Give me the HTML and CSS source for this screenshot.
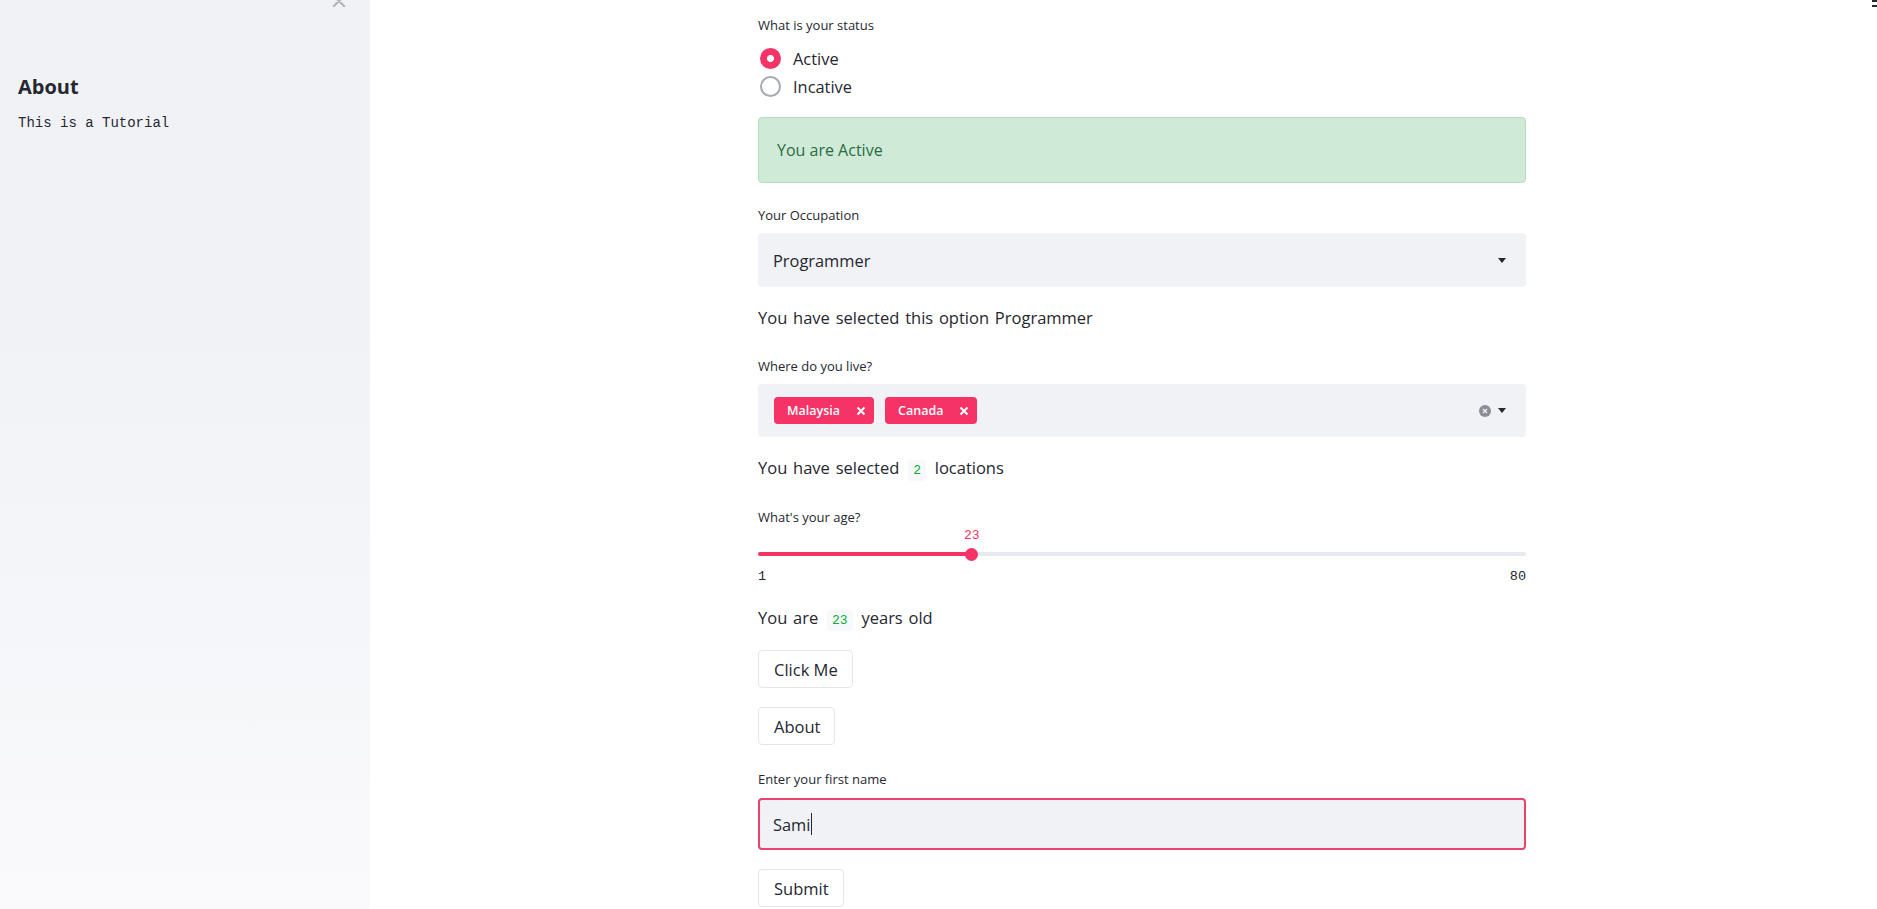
FILE: index.html
```html
<!DOCTYPE html>
<html>
<head>
<meta charset="utf-8">
<link rel="stylesheet" href="styles.css">
</head>
<body>
<div class="app">
  <aside class="sidebar">
    <button class="sidebar-close" aria-label="close">
      <svg width="14" height="14" viewBox="0 0 14 14"><path d="M2 2 L12 12 M12 2 L2 12" stroke="#b4b6bd" stroke-width="2.4" stroke-linecap="round"/></svg>
    </button>
    <h2 class="side-title">About</h2>
    <pre class="side-text">This is a Tutorial</pre>
  </aside>
  <main class="main">
    <div class="block">
      <div class="label">What is your status</div>
      <div class="radios">
        <div class="radio-row"><span class="radio radio-on"></span><span>Active</span></div>
        <div class="radio-row"><span class="radio"></span><span>Incative</span></div>
      </div>
      <div class="success">You are Active</div>

      <div class="label gap-label1">Your Occupation</div>
      <div class="select">
        <span class="select-value">Programmer</span>
        <span class="caret"></span>
      </div>
      <p class="text">You have selected this option Programmer</p>

      <div class="label gap-label2">Where do you live?</div>
      <div class="select multi">
        <div class="tags">
          <span class="tag">Malaysia<svg class="tag-x" width="10" height="10" viewBox="0 0 10 10"><path d="M1.5 1.5 L8.5 8.5 M8.5 1.5 L1.5 8.5" stroke="#ffffff" stroke-width="2"/></svg></span>
          <span class="tag">Canada<svg class="tag-x" width="10" height="10" viewBox="0 0 10 10"><path d="M1.5 1.5 L8.5 8.5 M8.5 1.5 L1.5 8.5" stroke="#ffffff" stroke-width="2"/></svg></span>
        </div>
        <div class="multi-icons">
          <svg width="12" height="12" viewBox="0 0 12 12"><circle cx="6" cy="6" r="6" fill="#8b8c95"/><path d="M4 4 L8 8 M8 4 L4 8" stroke="#f0f2f6" stroke-width="1.3"/></svg>
          <span class="caret"></span>
        </div>
      </div>
      <p class="text">You have selected <code>2</code> locations</p>

      <div class="label gap-label4">What's your age?</div>
      <div class="slider">
        <div class="slider-value-row"><span class="slider-value" style="left: 27.85%">23</span></div>
        <div class="track">
          <div class="track-fill" style="width: 27.85%"></div>
          <div class="thumb"></div>
        </div>
        <div class="slider-minmax"><span>1</span><span>80</span></div>
      </div>
      <p class="text age-text">You are <code>23</code> years old</p>

      <button class="btn btn-first">Click Me</button>
      <button class="btn">About</button>

      <div class="label gap-label3">Enter your first name</div>
      <div class="input">Sami<span class="cursor"></span></div>
      <button class="btn">Submit</button>
    </div>
  </main>
  <div class="menu-btn"><span></span><span></span></div>
</div>
</body>
</html>
```

FILE: styles.css
```css
* { box-sizing: border-box; }
html, body { margin: 0; padding: 0; height: 100%; overflow: hidden; }
body {
  font-family: "Open Sans", "Noto Sans", sans-serif;
  color: #262730;
  background: #ffffff;
}
.app {
  display: flex;
  height: 909px;
  position: relative;
}
.sidebar {
  width: 370px;
  flex: none;
  height: 100%;
  background: linear-gradient(180deg, #f0f2f6 0%, #f0f2f6 35%, #fafafc 100%);
  padding: 74px 18px 0 18px;
  position: relative;
}
.sidebar-close {
  position: absolute;
  left: 332px;
  top: -6px;
  border: none;
  background: none;
  padding: 0;
  width: 14px;
  height: 14px;
  display: block;
}
.side-title {
  margin: 0;
  font-size: 20px;
  line-height: 26px;
  font-weight: 700;
  color: #262730;
}
.side-text {
  margin: 13px 0 0 0;
  font-family: "Liberation Mono", "DejaVu Sans Mono", monospace;
  font-size: 14px;
  line-height: 20px;
  color: #262730;
}
.main {
  flex: 1;
  padding: 15px 0 0 388px;
}
.block {
  width: 768px;
  display: flex;
  flex-direction: column;
  align-items: flex-start;
}
.label {
  font-size: 13px;
  line-height: 20px;
  color: #262730;
}
.radios {
  margin-top: 9px;
  display: flex;
  flex-direction: column;
}
.radio-row {
  height: 28px;
  display: flex;
  align-items: center;
  font-size: 16.4px;
  gap: 12px;
  padding-left: 2px;
}
.radio {
  width: 21px;
  height: 21px;
  border-radius: 50%;
  border: 2px solid #a6a9b3;
  background: #fff;
  display: inline-block;
}
.radio-on {
  border: none;
  background: radial-gradient(circle, #ffffff 0 3.2px, #f63366 3.8px);
}
.success {
  margin-top: 17px;
  width: 100%;
  height: 66px;
  background: #cfebd8;
  border: 1px solid #b2ddc0;
  border-radius: 4px;
  color: #2b6b43;
  font-size: 16px;
  display: flex;
  align-items: center;
  padding-left: 18px;
}
.gap-label1 { margin-top: 22px; }
.gap-label2 { margin-top: 26px; }
.gap-label3 { margin-top: 24px; }
.gap-label4 { margin-top: 24px; }
.select {
  margin-top: 8px;
  width: 100%;
  height: 54px;
  background: #f0f2f6;
  border-radius: 4px;
  display: flex;
  align-items: center;
  justify-content: space-between;
  padding: 0 20px 0 15px;
  font-size: 16.4px;
}
.caret {
  width: 0;
  height: 0;
  border-left: 4.5px solid transparent;
  border-right: 4.5px solid transparent;
  border-top: 5px solid #262730;
  display: inline-block;
}
.multi { height: 53px; padding-left: 16px; }
.tags { display: flex; gap: 11px; }
.tag {
  background: #f63366;
  color: #ffffff;
  font-size: 12.5px;
  font-weight: 600;
  height: 27px;
  border-radius: 4px;
  display: inline-flex;
  align-items: center;
  padding: 0 8px 0 13px;
}
.tag-x {
  margin-left: 16px;
  display: block;
}
.multi-icons {
  display: flex;
  align-items: center;
  gap: 7px;
}
.text {
  margin: 19px 0 0 0;
  font-size: 16.5px;
  line-height: 24px;
  word-spacing: 1.5px;
}
code {
  font-family: "Liberation Mono", "DejaVu Sans Mono", monospace;
  font-size: 13px;
  color: #09ab3b;
  background: #f7f8fa;
  padding: 3px 5px;
  border-radius: 3px;
  margin: 0 3px;
  word-spacing: 0;
}
.slider { width: 100%; }
.slider-value-row {
  position: relative;
  height: 18px;
}
.slider-value {
  position: absolute;
  transform: translateX(-50%);
  font-family: "Liberation Mono", "DejaVu Sans Mono", monospace;
  font-size: 13px;
  line-height: 18px;
  color: #f63366;
}
.track {
  position: relative;
  height: 18px;
  display: flex;
  align-items: center;
}
.track::before {
  content: "";
  position: absolute;
  left: 0; right: 0;
  top: 7px;
  height: 4px;
  border-radius: 2px;
  background: #e6e9ef;
}
.track-fill {
  position: relative;
  height: 4px;
  border-radius: 2px;
  background: #f63366;
}
.thumb {
  position: relative;
  width: 13px;
  height: 13px;
  margin-left: -7px;
  border-radius: 50%;
  background: #f63366;
}
.slider-minmax {
  margin-top: 5px;
  display: flex;
  justify-content: space-between;
  font-family: "Liberation Mono", "DejaVu Sans Mono", monospace;
  font-size: 13.5px;
  line-height: 18px;
  color: #262730;
}
.age-text { margin-top: 20px; }
.btn {
  margin-top: 19px;
  height: 38px;
  padding: 0 14px 0 15px;
  background: #ffffff;
  border: 1px solid #e6e6ea;
  border-radius: 4px;
  font-family: inherit;
  font-size: 16.5px;
  color: #262730;
}
.btn-first { margin-top: 17px; }
.input {
  margin-top: 9px;
  width: 100%;
  height: 52px;
  background: #f0f2f6;
  border: 2px solid #e8426f;
  border-radius: 4px;
  display: flex;
  align-items: center;
  padding-left: 13px;
  font-size: 16.4px;
}
.cursor {
  display: inline-block;
  width: 1px;
  height: 22px;
  background: #262730;
  margin-left: 1px;
}
.menu-btn {
  position: absolute;
  right: 0;
  top: 0;
  width: 5px;
  display: flex;
  flex-direction: column;
  gap: 3px;
}
.menu-btn span {
  display: block;
  height: 2px;
  background: #262730;
}
```
